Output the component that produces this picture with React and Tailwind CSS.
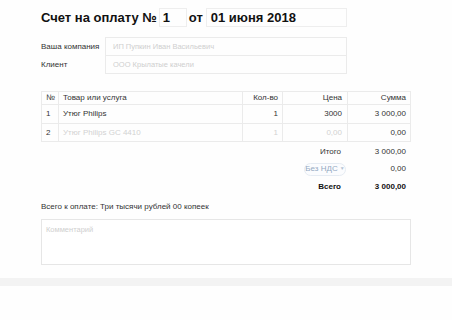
export default function App() {
  const font = { fontFamily: '"Liberation Sans", Arial, sans-serif' };
  return (
    <div className="w-[452px] h-[320px] bg-[#fefefe] text-[#333]" style={font}>
      <div className="w-[411px] pl-[41px] pt-[8px]">
        {/* Title */}
        <div className="flex items-center h-[19px] text-[13px] font-bold text-[#111]">
          <span className="leading-none">Счет на оплату №</span>
          <div className="ml-[2px] w-[28px] h-[19px] border border-[#eeeeee] flex items-center pl-[3px] leading-none">1</div>
          <span className="ml-[2px] leading-none">от</span>
          <div className="ml-[3px] w-[141px] h-[19px] border border-[#eeeeee] flex items-center pl-[4px] leading-none">01 июня 2018</div>
        </div>
        {/* Company / client */}
        <div className="mt-[10px] flex text-[8px]">
          <div className="w-[64px] flex flex-col">
            <div className="h-[19px] flex items-center pt-[1px]">Ваша компания</div>
            <div className="h-[18px] flex items-center">Клиент</div>
          </div>
          <div className="w-[242px] border border-[#ebebeb] text-[#cfcfcf] text-[7.5px]">
            <div className="h-[18px] flex items-center pl-[7px] border-b border-[#ebebeb]">ИП Пупкин Иван Васильевич</div>
            <div className="h-[17px] flex items-center pl-[7px]">ООО Крылатые качели</div>
          </div>
        </div>
        {/* Table */}
        <div className="mt-[17px] w-[370px] border border-[#ebebeb] text-[8px]">
          <div className="flex h-[13px] border-b border-[#ebebeb]">
            <div className="w-[17px] flex items-center pl-[4px] border-r border-[#ebebeb]">№</div>
            <div className="w-[184px] flex items-center pl-[4px] border-r border-[#ebebeb]">Товар или услуга</div>
            <div className="w-[40px] flex items-center justify-end pr-[4px] border-r border-[#ebebeb]">Кол-во</div>
            <div className="w-[65px] flex items-center justify-end pr-[5px] border-r border-[#ebebeb]">Цена</div>
            <div className="flex-1 flex items-center justify-end pr-[4px]">Сумма</div>
          </div>
          <div className="flex h-[19px] border-b border-[#ebebeb]">
            <div className="w-[17px] flex items-center pl-[4px] border-r border-[#ebebeb]">1</div>
            <div className="w-[184px] flex items-center pl-[4px] border-r border-[#ebebeb]">Утюг Philips</div>
            <div className="w-[40px] flex items-center justify-end pr-[4px] border-r border-[#ebebeb]">1</div>
            <div className="w-[65px] flex items-center justify-end pr-[5px] border-r border-[#ebebeb]">3000</div>
            <div className="flex-1 flex items-center justify-end pr-[4px]">3 000,00</div>
          </div>
          <div className="flex h-[17px]">
            <div className="w-[17px] flex items-center pl-[4px] border-r border-[#ebebeb]">2</div>
            <div className="w-[184px] flex items-center pl-[4px] border-r border-[#ebebeb] text-[#d2d2d2]">Утюг Philips GC 4410</div>
            <div className="w-[40px] flex items-center justify-end pr-[4px] border-r border-[#ebebeb] text-[#d2d2d2]">1</div>
            <div className="w-[65px] flex items-center justify-end pr-[5px] border-r border-[#ebebeb] text-[#d2d2d2]">0,00</div>
            <div className="flex-1 flex items-center justify-end pr-[4px]">0,00</div>
          </div>
        </div>
        {/* Totals */}
        <div className="w-[370px] text-[8px] mt-[1px]">
          <div className="flex h-[17px] items-center">
            <div className="w-[305px] text-right pr-[5px]">Итого</div>
            <div className="flex-1 text-right pr-[5px]">3 000,00</div>
          </div>
          <div className="flex h-[18px] items-center">
            <div className="w-[305px] flex justify-end">
              <div className="h-[13px] w-[42px] rounded-full border border-[#e6ecf3] bg-[#fbfcfe] flex items-center justify-center text-[#94a9c2]">
                Без НДС <span className="ml-[2px] text-[5px] text-[#b5c3d4]">▼</span>
              </div>
            </div>
            <div className="flex-1 text-right pr-[5px]">0,00</div>
          </div>
          <div className="flex h-[17px] items-center font-bold text-[#111]">
            <div className="w-[305px] text-right pr-[5px]">Всего</div>
            <div className="flex-1 text-right pr-[5px]">3 000,00</div>
          </div>
        </div>
        <div className="mt-[6px] h-[12px] flex items-center text-[8px]">Всего к оплате: Три тысячи рублей 00 копеек</div>
        <div className="mt-[6px] w-[370px] h-[46px] border border-[#e6e6e6] bg-white text-[7.5px] text-[#cfcfcf] pl-[4px] pt-[6px] leading-none">
          Комментарий
        </div>
      </div>
      <div className="mt-[13px] h-[8px] bg-[#f3f3f3]" />
    </div>
  );
}
